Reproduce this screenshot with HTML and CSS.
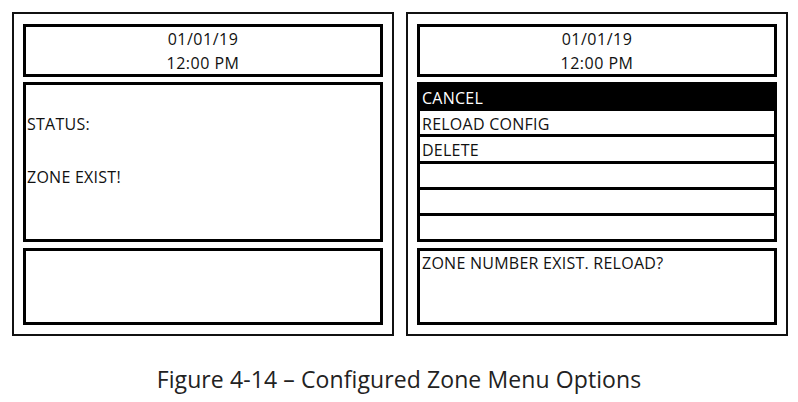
FILE: index.html
```html
<!DOCTYPE html>
<html>
<head>
<meta charset="utf-8">
<link rel="stylesheet" href="styles.css">
</head>
<body>
<div class="page">
  <div class="panels">
    <div class="panel">
      <div class="box header">
        <div class="hline">01/01/19</div>
        <div class="hline">12:00 PM</div>
      </div>
      <div class="box main">
        <div class="msg status">STATUS:</div>
        <div class="msg exist">ZONE EXIST!</div>
      </div>
      <div class="box footer"></div>
    </div>
    <div class="panel">
      <div class="box header">
        <div class="hline">01/01/19</div>
        <div class="hline">12:00 PM</div>
      </div>
      <div class="menu">
        <div class="item selected">CANCEL</div>
        <div class="item">RELOAD CONFIG</div>
        <div class="item">DELETE</div>
        <div class="item"></div>
        <div class="item"></div>
        <div class="item"></div>
      </div>
      <div class="box footer">
        <div class="msg prompt">ZONE NUMBER EXIST. RELOAD?</div>
      </div>
    </div>
  </div>
  <div class="caption">Figure 4-14 – Configured Zone Menu Options</div>
</div>
</body>
</html>
```

FILE: styles.css
```css
html, body {
  margin: 0;
  padding: 0;
  background: #fff;
}
.page {
  width: 798px;
  height: 402px;
  font-family: "Open Sans", "Liberation Sans", sans-serif;
  color: #111;
}
.panels {
  display: flex;
  gap: 12px;
  padding: 12px 0 0 12px;
}
.panel {
  border: 2px solid #111;
  padding: 10px 9px 9px 9px;
  box-sizing: border-box;
  height: 324px;
  width: 382px;
  display: flex;
  flex-direction: column;
}
.box {
  border: 3px solid #000;
  box-sizing: border-box;
}
.header {
  height: 53px;
  display: flex;
  flex-direction: column;
  align-items: center;
  justify-content: center;
  font-size: 16px;
  line-height: 24px;
  letter-spacing: 0.5px;
}
.main {
  height: 160px;
  margin-top: 5px;
  padding: 30px 0 0 1px;
}
.msg {
  font-size: 16px;
  line-height: 18px;
  letter-spacing: 0.25px;
}
.exist {
  margin-top: 35px;
}
.footer {
  height: 77px;
  margin-top: 6px;
  padding: 3px 0 0 2px;
}
.menu {
  height: 161px;
  margin-top: 5px;
  background: #000;
  padding: 3px;
  box-sizing: border-box;
  display: grid;
  grid-template-rows: repeat(6, 1fr);
  row-gap: 3px;
}
.item {
  background: #fff;
  font-size: 16px;
  line-height: 18px;
  padding: 4px 0 0 2px;
  letter-spacing: 0.25px;
  overflow: hidden;
}
.item.selected {
  background: #000;
  color: #fff;
}
.caption {
  margin-top: 28px;
  text-align: center;
  font-size: 23px;
  line-height: 30px;
  letter-spacing: 0.1px;
  color: #222;
}
```
